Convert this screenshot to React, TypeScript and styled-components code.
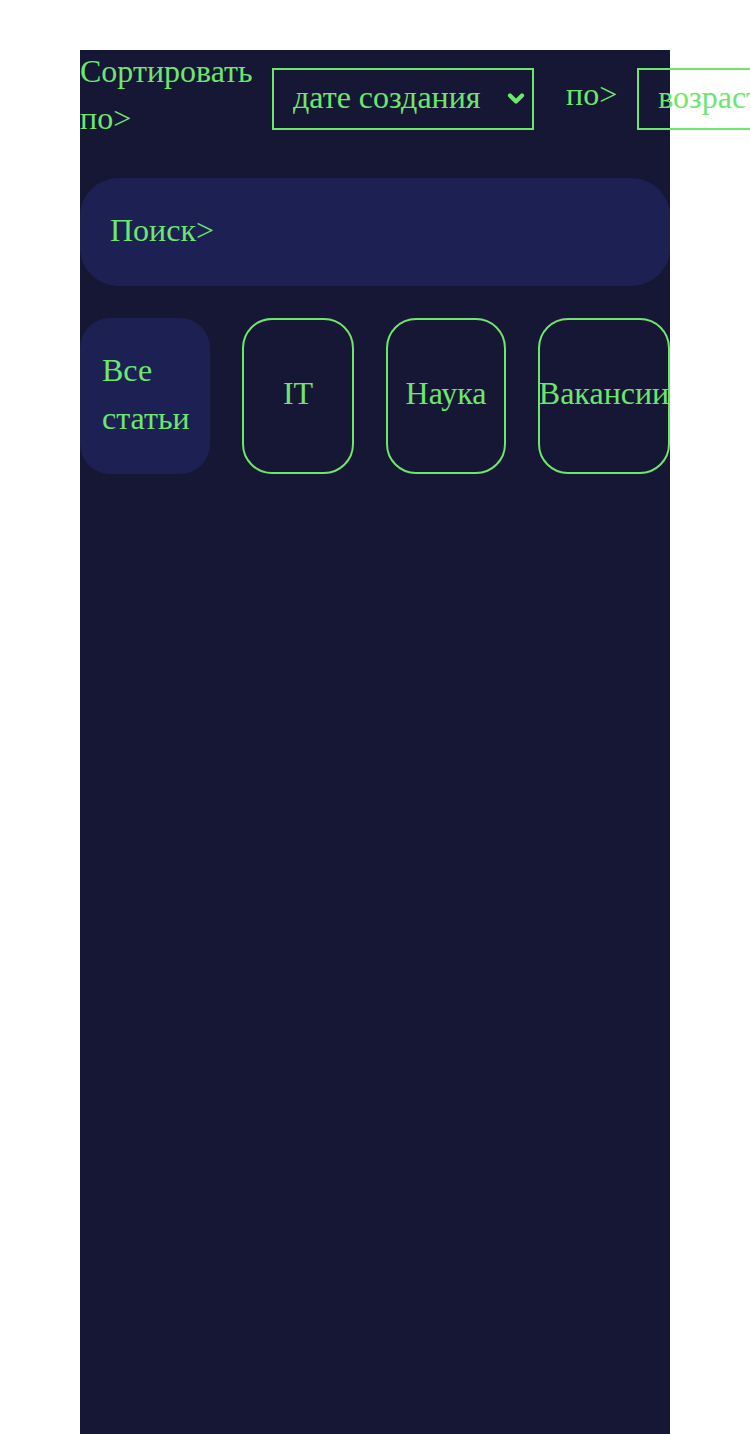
import React from "react";
import styled, { createGlobalStyle } from "styled-components";

const GREEN = "#6ee66e";

const Global = createGlobalStyle`
  html, body { margin: 0; padding: 0; background: #ffffff; }
  body { font-family: "Liberation Serif", "Times New Roman", serif; }
`;

const Page = styled.div`
  width: 590px;
  min-height: 1384px;
  margin: 50px 0 0 80px;
  background: #161735;
  color: ${GREEN};
  font-size: 32px;
  line-height: 46px;
`;

const SortRow = styled.div`
  display: flex;
  flex-wrap: nowrap;
  align-items: flex-start;
  height: 92px;
`;

const Label = styled.span<{ $w?: number; $mt?: number }>`
  flex: none;
  width: ${(p) => (p.$w ? `${p.$w}px` : "auto")};
  margin-top: ${(p) => p.$mt ?? 0}px;
  margin-right: 20px;
  line-height: 47px;
`;

const SelectWrap = styled.div<{ $w: number }>`
  position: relative;
  flex: none;
  width: ${(p) => p.$w}px;
  height: 62px;
  margin-top: 18px;
  margin-right: 32px;
`;

const Select = styled.select`
  appearance: none;
  width: 100%;
  height: 100%;
  box-sizing: border-box;
  border: 2px solid ${GREEN};
  border-radius: 0;
  background: transparent;
  color: ${GREEN};
  font-family: "Liberation Serif", "Times New Roman", serif;
  font-size: 32px;
  padding: 0 0 4px 19px;
  outline: none;
`;

const Chevron = styled.svg`
  position: absolute;
  right: 9px;
  top: 24px;
  width: 18px;
  height: 13px;
  pointer-events: none;
`;

const Search = styled.div`
  margin-top: 36px;
  height: 108px;
  box-sizing: border-box;
  border-radius: 38px;
  background: #1c2052;
  display: flex;
  align-items: center;
  padding: 0 0 5px 30px;
`;

const Tabs = styled.div`
  display: flex;
  gap: 32px;
  margin-top: 32px;
`;

const Tab = styled.div<{ $w: number; $active?: boolean }>`
  flex: none;
  box-sizing: border-box;
  width: ${(p) => p.$w}px;
  height: 156px;
  border-radius: 30px;
  display: flex;
  align-items: center;
  white-space: nowrap;
  ${(p) =>
    p.$active
      ? `
    background: #1c2052;
    padding: 0 0 4px 22px;
    white-space: normal;
    line-height: 48px;
  `
      : `
    border: 2px solid ${GREEN};
    justify-content: center;
    padding-bottom: 6px;
  `}
`;

const ChevronIcon = () => (
  <Chevron viewBox="0 0 18 13">
    <path
      d="M3 3.5 L9 9.5 L15 3.5"
      fill="none"
      stroke={GREEN}
      strokeWidth="4.2"
      strokeLinecap="round"
      strokeLinejoin="round"
    />
  </Chevron>
);

export default function App() {
  return (
    <>
      <Global />
      <Page>
        <SortRow>
          <Label $w={172} $mt={-2}>
            Сортировать по&gt;
          </Label>
          <SelectWrap $w={262}>
            <Select defaultValue="date">
              <option value="date">дате создания</option>
              <option value="name">названию</option>
            </Select>
            <ChevronIcon />
          </SelectWrap>
          <Label $mt={21}>по&gt;</Label>
          <SelectWrap $w={262}>
            <Select defaultValue="asc">
              <option value="asc">возрастанию</option>
              <option value="desc">убыванию</option>
            </Select>
            <ChevronIcon />
          </SelectWrap>
        </SortRow>
        <Search>Поиск&gt;</Search>
        <Tabs>
          <Tab $w={130} $active>
            Все статьи
          </Tab>
          <Tab $w={112}>IT</Tab>
          <Tab $w={120}>Наука</Tab>
          <Tab $w={132}>Вакансии</Tab>
        </Tabs>
      </Page>
    </>
  );
}
